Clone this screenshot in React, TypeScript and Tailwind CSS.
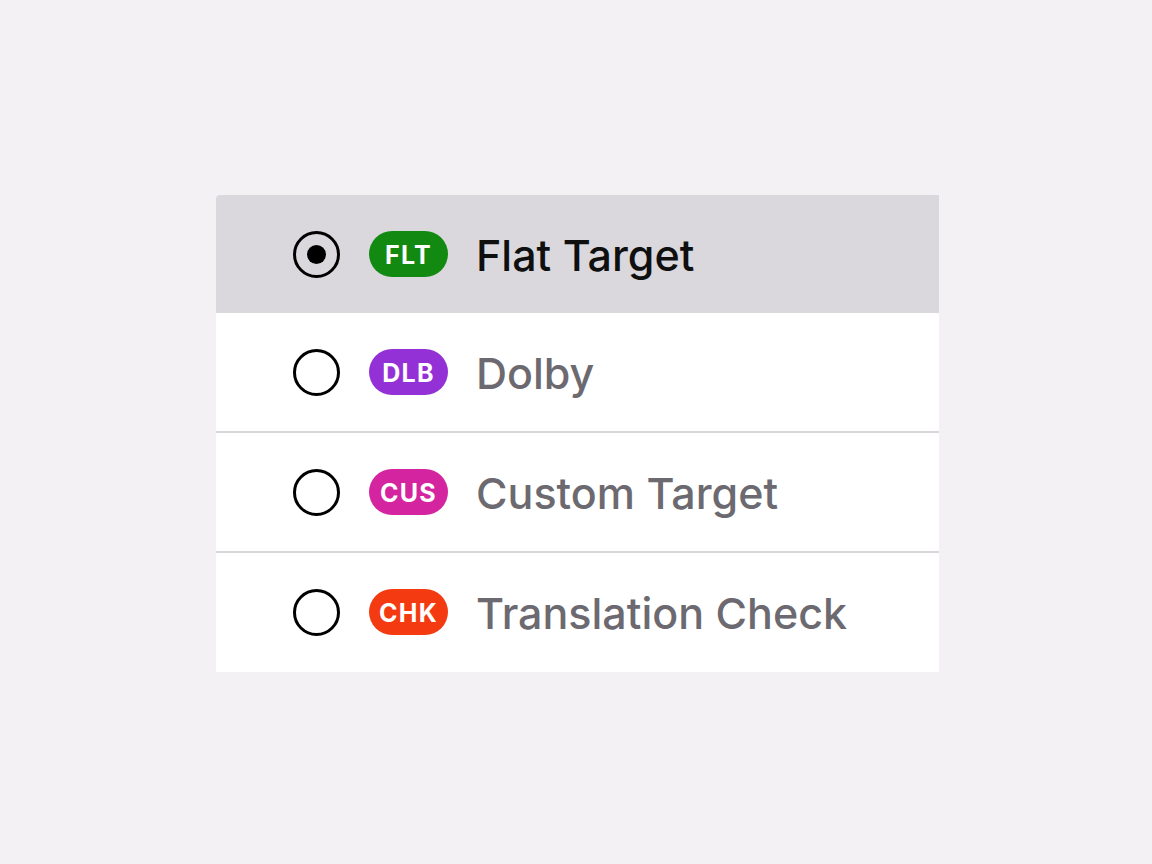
import React, { useState } from "react";

type Target = { code: string; label: string; badge: string };

const targets: Target[] = [
  { code: "FLT", label: "Flat Target", badge: "bg-[#128a12]" },
  { code: "DLB", label: "Dolby", badge: "bg-[#9331d6]" },
  { code: "CUS", label: "Custom Target", badge: "bg-[#d4249f]" },
  { code: "CHK", label: "Translation Check", badge: "bg-[#f43a10]" },
];

function Radio({ checked }: { checked: boolean }) {
  return (
    <span className="flex h-[47px] w-[47px] items-center justify-center rounded-full border-[3px] border-black">
      {checked && <span className="h-[19px] w-[19px] rounded-full bg-black" />}
    </span>
  );
}

export default function App() {
  const [selected, setSelected] = useState("FLT");

  return (
    <div
      className="flex min-h-screen w-full items-start bg-[#f3f1f4] pl-[216px] pt-[195px]"
      style={{ fontFamily: "Inter, 'Noto Sans', sans-serif" }}
    >
      <div className="flex h-[477px] w-[723px] flex-col overflow-hidden rounded-tl-[4px] bg-white">
        {targets.map((t, i) => {
          const active = selected === t.code;
          return (
            <React.Fragment key={t.code}>
              {i > 1 && <div className="h-[2px] bg-[#d8d6da]" />}
              <button
                onClick={() => setSelected(t.code)}
                className={
                  "flex h-[118px] items-center pl-[77px] text-left " +
                  (active ? "bg-[#dad8dc]" : "bg-white")
                }
              >
                <Radio checked={active} />
                <span
                  className={
                    "ml-[29px] flex h-[46px] w-[79px] items-center justify-center rounded-full pt-[3px] text-[25px] font-bold tracking-[1.2px] text-white " +
                    t.badge
                  }
                >
                  {t.code}
                </span>
                <span
                  className={
                    "ml-[28px] mt-[3px] text-[43px] font-medium " +
                    (active ? "text-[#0f0f10]" : "text-[#6c6a70]")
                  }
                >
                  {t.label}
                </span>
              </button>
            </React.Fragment>
          );
        })}
      </div>
    </div>
  );
}
